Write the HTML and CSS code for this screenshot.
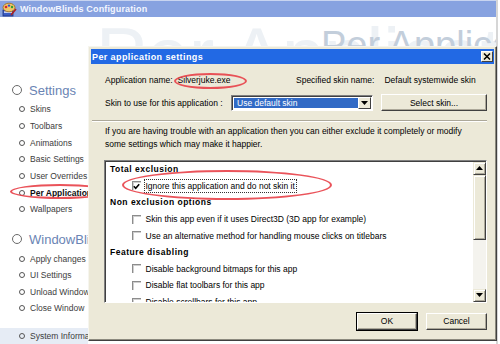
FILE: index.html
```html
<!DOCTYPE html>
<html lang="en">
<head>
    <meta charset="UTF-8">
    <meta name="viewport" content="width=device-width, initial-scale=1.0">
    <title>WindowBlinds Configuration</title>
    <link rel="stylesheet" href="styles.css">
</head>
<body>
    <div class="window">
        <header class="titlebar">
            <svg class="app-icon" width="15" height="15" viewBox="0 0 15 15">
                <rect x="1" y="8" width="10" height="6" fill="#3a5cc4" stroke="#1c2f7a" stroke-width="0.8"/>
                <rect x="2" y="9.5" width="8" height="1.2" fill="#ffffff"/>
                <ellipse cx="7" cy="5.5" rx="6" ry="4.3" fill="#efc668" stroke="#9a6a1c" stroke-width="0.8"/>
                <circle cx="4" cy="5" r="1.3" fill="#d8262a"/>
                <circle cx="7" cy="3.6" r="1.2" fill="#2f4fd6"/>
                <circle cx="10" cy="5" r="1.2" fill="#2f9e36"/>
                <path d="M9 13 L14 7" stroke="#b02020" stroke-width="1.6"/>
            </svg>
            <span class="titlebar-text">WindowBlinds Configuration</span>
        </header>

        <div class="frame">
            <aside class="sidebar">
                <div class="group">
                    <div class="group-title"><i class="ring ring-big"></i>Settings</div>
                    <ul class="links">
                        <li><i class="ring"></i>Skins</li>
                        <li><i class="ring"></i>Toolbars</li>
                        <li><i class="ring"></i>Animations</li>
                        <li><i class="ring"></i>Basic Settings</li>
                        <li><i class="ring"></i>User Overrides</li>
                        <li class="current"><i class="ring"></i>Per Application<span class="mark mark-side"></span></li>
                        <li><i class="ring"></i>Wallpapers</li>
                    </ul>
                </div>
                <div class="group group-second">
                    <div class="group-title"><i class="ring ring-big"></i>WindowBlinds</div>
                    <ul class="links">
                        <li><i class="ring"></i>Apply changes</li>
                        <li><i class="ring"></i>UI Settings</li>
                        <li><i class="ring"></i>Unload WindowBlinds</li>
                        <li><i class="ring"></i>Close Window</li>
                    </ul>
                </div>
                <div class="sysinfo"><i class="ring"></i>System Information</div>
            </aside>

            <div class="canvas">
                <div class="watermark watermark-big">Per Application</div>
                <div class="watermark">Per Application</div>
            </div>
        </div>
    </div>

    <div class="dialog">
        <div class="dialog-title">
            <span>Per application settings</span>
            <span class="close-btn">
                <svg width="8" height="7" viewBox="0 0 8 7"><path d="M1 0.5 L7 6.5 M7 0.5 L1 6.5" stroke="#000" stroke-width="1.5"/></svg>
            </span>
        </div>

        <div class="dialog-body">
            <div class="row-info">
                <div class="info-left">
                    <span>Application name:</span>
                    <span class="value">Silverjuke.exe</span>
                    <span class="mark mark-app"></span>
                </div>
                <div class="info-right">
                    <span>Specified skin name:</span>
                    <span class="value value-skin">Default systemwide skin</span>
                </div>
            </div>

            <div class="row-skin">
                <span class="skin-label">Skin to use for this application :</span>
                <div class="select">
                    <span class="select-value">Use default skin</span>
                    <span class="select-arrow">
                        <svg width="7" height="4" viewBox="0 0 7 4"><path d="M0 0 H7 L3.5 4 Z" fill="#000"/></svg>
                    </span>
                </div>
                <button class="btn btn-wide">Select skin...</button>
            </div>

            <div class="separator"></div>

            <p class="hint">If you are having trouble with an application then you can either exclude it completely or modify<br>some settings which may make it happier.</p>

            <div class="options">
                <div class="options-list">
                    <div class="opt-head">Total exclusion</div>
                    <div class="opt">
                        <span class="check">
                            <svg width="7" height="7" viewBox="0 0 7 7"><path d="M0.8 3.2 L2.7 5.2 L6.2 1.2" stroke="#000" stroke-width="1.6" fill="none"/></svg>
                        </span>
                        <span class="opt-label focused">Ignore this application and do not skin it</span>
                        <span class="mark mark-ignore"></span>
                    </div>
                    <div class="opt-head">Non exclusion options</div>
                    <div class="opt"><span class="check"></span><span class="opt-label">Skin this app even if it uses Direct3D (3D app for example)</span></div>
                    <div class="opt"><span class="check"></span><span class="opt-label">Use an alternative method for handling mouse clicks on titlebars</span></div>
                    <div class="opt-head">Feature disabling</div>
                    <div class="opt"><span class="check"></span><span class="opt-label">Disable background bitmaps for this app</span></div>
                    <div class="opt"><span class="check"></span><span class="opt-label">Disable flat toolbars for this app</span></div>
                    <div class="opt"><span class="check"></span><span class="opt-label">Disable scrollbars for this app</span></div>
                </div>
                <div class="scrollbar">
                    <span class="sb-btn">
                        <svg width="7" height="4" viewBox="0 0 7 4"><path d="M0 4 H7 L3.5 0 Z" fill="#000"/></svg>
                    </span>
                    <span class="sb-thumb"></span>
                    <span class="sb-track"></span>
                    <span class="sb-btn">
                        <svg width="7" height="4" viewBox="0 0 7 4"><path d="M0 0 H7 L3.5 4 Z" fill="#000"/></svg>
                    </span>
                </div>
            </div>

            <div class="actions">
                <button class="btn btn-default">OK</button>
                <button class="btn btn-cancel">Cancel</button>
            </div>
        </div>
    </div>
</body>
</html>
```

FILE: styles.css
```css
:root {
    --face: #ece9d8;
    --shadow: #aca899;
    --dark: #404040;
    --title-outer: #87a2e0;
    --title-dialog: #2269e4;
    --side-head: #6a84b4;
    --side-text: #3c3c3c;
    --mark: rgba(232, 64, 72, 0.9);
    --ui-font: "Liberation Sans", Arial, sans-serif;
}

* {
    box-sizing: border-box;
}

body {
    margin: 0;
    width: 500px;
    height: 344px;
    overflow: hidden;
    position: relative;
    font-family: var(--ui-font);
    font-size: 8.5px;
    color: #000;
    background: #fff;
}

/* outer window */

.window {
    width: 498px;
    height: 344px;
    display: flex;
    flex-direction: column;
    border-right: 2px solid #d6d6d6;
}

.titlebar {
    height: 17px;
    flex: none;
    display: flex;
    align-items: center;
    padding-left: 2px;
    background-color: var(--title-outer);
    border-top: 1px solid #c8d4f0;
}

.app-icon {
    flex: none;
}

.titlebar-text {
    margin-left: 3px;
    color: #f4f7ff;
    font-size: 9px;
    font-weight: bold;
    letter-spacing: 0.15px;
}

.frame {
    flex: 1;
    display: flex;
}

.sidebar {
    width: 88px;
    flex: none;
    display: flex;
    flex-direction: column;
    padding-top: 64px;
    background: #fff;
}

.group-title {
    height: 18px;
    display: flex;
    align-items: center;
    padding-left: 12px;
    margin-bottom: 2px;
    font-size: 13px;
    color: var(--side-head);
    white-space: nowrap;
}

.group-second {
    margin-top: 12.6px;
}

.links {
    list-style: none;
    margin: 0;
    padding: 0;
}

.links li,
.sysinfo {
    position: relative;
    height: 16.67px;
    display: flex;
    align-items: center;
    padding-left: 19px;
    color: var(--side-text);
    white-space: nowrap;
}

.links li.current {
    font-weight: bold;
    color: #111;
}

.ring {
    display: inline-block;
    width: 6px;
    height: 6px;
    margin-right: 5px;
    border: 1px solid #555;
    border-radius: 50%;
    flex: none;
}

.ring-big {
    width: 10px;
    height: 10px;
    margin-right: 7px;
    border: 1.5px solid #6a6a6a;
}

.sysinfo {
    margin-top: 11px;
    flex: 1;
    align-items: flex-start;
    line-height: 16.67px;
    background-color: #e6ecf5;
}

.sysinfo .ring {
    margin-top: 5.3px;
}

.canvas {
    flex: 1;
    position: relative;
    overflow: hidden;
    background: #fff;
}

/* only the upper part of the lettering shows above the dialog */
.watermark {
    position: absolute;
    left: 233px;
    top: 9px;
    height: 21px;
    overflow: hidden;
    font-size: 38px;
    line-height: 1;
    color: #c3cedb;
    white-space: nowrap;
}

.watermark-big {
    left: 8px;
    top: 0;
    height: 30px;
    font-size: 76px;
    color: #edf1f5;
}

/* red marker ellipses */

.mark {
    position: absolute;
    border: 2px solid var(--mark);
    border-radius: 50%;
    pointer-events: none;
}

.mark-side {
    left: 10px;
    top: 0;
    width: 100px;
    height: 15px;
}

.mark-app {
    left: 69px;
    top: -2px;
    width: 73px;
    height: 16px;
}

.mark-ignore {
    left: 12px;
    top: -7.6px;
    width: 210px;
    height: 30px;
}

/* dialog */

.dialog {
    position: absolute;
    left: 88px;
    top: 46px;
    width: 409px;
    height: 295px;
    display: flex;
    flex-direction: column;
    padding: 2px;
    background-color: var(--face);
    border: 1px solid;
    border-color: #f6f5ee var(--dark) var(--dark) #f6f5ee;
    box-shadow: inset -1px -1px 0 #8c8a7e;
}

.dialog-title {
    height: 15px;
    flex: none;
    display: flex;
    align-items: center;
    justify-content: space-between;
    padding: 0 1px 0 1px;
    background-color: var(--title-dialog);
    color: #fff;
    font-size: 9px;
    font-weight: bold;
    letter-spacing: 0.4px;
}

.close-btn {
    width: 12px;
    height: 11px;
    display: flex;
    align-items: center;
    justify-content: center;
    background-color: var(--face);
    border: 1px solid;
    border-color: #fff var(--dark) var(--dark) #fff;
}

.dialog-body {
    flex: 1;
    display: flex;
    flex-direction: column;
    padding: 9px 7px 0 14px;
}

.row-info {
    height: 14px;
    display: flex;
    align-items: center;
    white-space: nowrap;
}

.info-left {
    position: relative;
    width: 191px;
    display: flex;
}

.info-right {
    display: flex;
}

.value {
    margin-left: 5px;
}

.value-skin {
    margin-left: 10px;
}

.row-skin {
    height: 17px;
    margin-top: 7px;
    display: flex;
    align-items: center;
    white-space: nowrap;
}

.skin-label {
    width: 126px;
}

.select {
    width: 142px;
    height: 16px;
    display: flex;
    padding: 2px 1px 2px 2px;
    background: #fff;
    border: 1px solid;
    border-color: #808080 #fff #fff #808080;
    box-shadow: inset 1px 1px 0 var(--dark);
}

.select-value {
    flex: 1;
    padding-left: 3px;
    line-height: 10px;
    color: #fff;
    background-color: #316ac5;
}

.select-arrow {
    width: 13px;
    margin-top: -1px;
    margin-bottom: -1px;
    display: flex;
    align-items: center;
    justify-content: center;
    background-color: var(--face);
    border: 1px solid;
    border-color: #fff var(--dark) var(--dark) #fff;
}

.btn {
    height: 17px;
    padding: 0;
    font-family: var(--ui-font);
    font-size: 8.5px;
    color: #000;
    background-color: var(--face);
    border: 1px solid;
    border-color: #fff var(--dark) var(--dark) #fff;
    box-shadow: inset -1px -1px 0 var(--shadow);
}

.btn-wide {
    width: 106px;
    margin-left: 8px;
}

.separator {
    margin: 9px 0 0 -13px;
    border-top: 1px solid var(--shadow);
    border-bottom: 1px solid #fff;
}

.hint {
    margin: 3.4px 0 0;
    line-height: 12.6px;
    white-space: nowrap;
}

.options {
    height: 143px;
    margin: 9.4px 0 0 -1px;
    display: flex;
    background: #fff;
    border: 1px solid;
    border-color: #808080 #fff #fff #808080;
    box-shadow: inset 1px 1px 0 var(--dark);
}

.options-list {
    flex: 1;
    overflow: hidden;
    padding-left: 5px;
}

.opt-head,
.opt {
    height: 16.6px;
    display: flex;
    align-items: center;
    white-space: nowrap;
}

.opt-head {
    font-weight: bold;
    letter-spacing: 0.5px;
}

.opt {
    position: relative;
    padding-left: 21.5px;
}

.check {
    width: 9px;
    height: 9px;
    flex: none;
    display: flex;
    align-items: center;
    justify-content: center;
    border-top: 1px solid #8c8c8c;
    border-left: 1px solid #8c8c8c;
    box-shadow: inset 1px 1px 0 #cfcfcf;
}

.opt-label {
    margin-left: 5px;
}

.opt-label.focused {
    margin-left: 3px;
    padding: 1px;
    border: 1px dotted #333;
}

.scrollbar {
    width: 13px;
    flex: none;
    display: flex;
    flex-direction: column;
    padding-top: 1px;
}

.sb-btn,
.sb-thumb {
    display: flex;
    align-items: center;
    justify-content: center;
    background-color: var(--face);
    border: 1px solid;
    border-color: var(--face) var(--dark) var(--dark) var(--face);
    box-shadow: inset 1px 1px 0 #fff, inset -1px -1px 0 var(--shadow);
}

.sb-btn {
    height: 13px;
    flex: none;
}

.sb-thumb {
    height: 65px;
    flex: none;
}

.sb-track {
    flex: 1;
    background-color: #f4f3ee;
}

.actions {
    margin-top: 10px;
    display: flex;
    justify-content: flex-end;
    gap: 9px;
}

.btn-default {
    width: 60px;
    outline: 1px solid #000;
}

.btn-cancel {
    width: 61px;
}
```
